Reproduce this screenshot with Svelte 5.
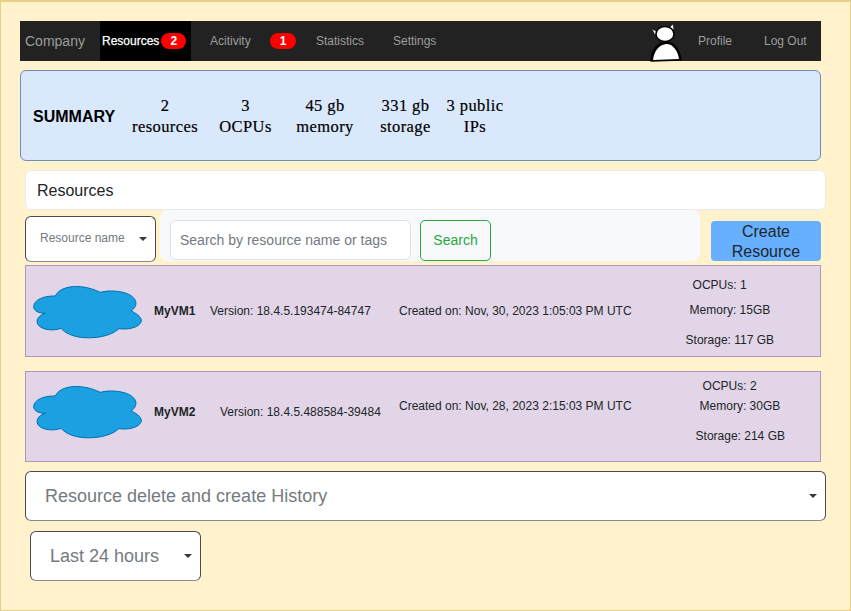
<script>
  const summary = [
    { top: '2', bottom: 'resources', width: 68, gap: 19 },
    { top: '3', bottom: 'OCPUs', width: 55, gap: 22 },
    { top: '45 gb', bottom: 'memory', width: 60, gap: 24 },
    { top: '331 gb', bottom: 'storage', width: 53, gap: 14 },
    { top: '3 public', bottom: 'IPs', width: 58, gap: 0 }
  ]
</script>

{#snippet cloud()}
  <svg class="cloud" viewBox="38 33 327 160" width="109" height="53.3" aria-hidden="true">
    <path d="M40 95C40 75 70 62 105 63C115 40 150 32 180 35C205 37 225 45 240 52C275 42 345 50 347 85C347 95 340 103 332 108C355 118 365 130 363 140C355 158 325 165 296 161C270 185 220 192 180 187C155 183 135 175 122 160C90 172 50 160 50 140C50 130 58 120 75 115C55 115 40 108 40 95Z" fill="#1ba1e2" stroke="#006eaf" stroke-width="3" />
  </svg>
{/snippet}

<div class="page">
  <nav class="nav">
    <span class="brand">Company</span>
    <span class="tab active">Resources<b class="badge">2</b></span>
    <span class="tab activity">Acitivity</span>
    <b class="badge second">1</b>
    <span class="tab stats">Statistics</span>
    <span class="tab settings">Settings</span>
    <svg class="avatar" viewBox="0 0 36 44" width="36" height="44" aria-hidden="true">
      <path d="M9 10L3 7L6 13ZM20 6L24 2L25 8Z" fill="#fff" stroke="#000" stroke-width="0.5" />
      <ellipse cx="16" cy="12" rx="9" ry="7.5" fill="#fff" stroke="#000" stroke-width="1.5" />
      <path d="M2 39C2 30 7 21 17 20C26 20 31 30 32 38Z" fill="#000" stroke="#000" stroke-width="1.5" stroke-linejoin="round" />
      <path d="M4 38C5 30 9 23 17 22C25 22 29 30 30 37Z" fill="#fff" />
    </svg>
    <span class="tab profile">Profile</span>
    <span class="tab logout">Log Out</span>
  </nav>

  <section class="summary">
    <strong>SUMMARY</strong>
    {#each summary as item}
      <div class="stat" style="width: {item.width}px; margin-right: {item.gap}px">
        <span>{item.top}</span>
        <span>{item.bottom}</span>
      </div>
    {/each}
  </section>

  <div class="title">Resources</div>

  <div class="toolbar">
    <div class="select name-select">Resource name<i class="caret"></i></div>
    <div class="search-panel">
      <div class="search-input">Search by resource name or tags</div>
      <div class="search-btn">Search</div>
    </div>
    <div class="create">Create Resource</div>
  </div>

  <div class="vm first">
    {@render cloud()}
    <b class="vm-name">MyVM1</b>
    <span class="version">Version: 18.4.5.193474-84747</span>
    <span class="created">Created on: Nov, 30, 2023 1:05:03 PM UTC</span>
    <div class="specs">
      <span class="ocpu">OCPUs: 1</span>
      <span class="memory">Memory: 15GB</span>
      <span class="storage">Storage: 117 GB</span>
    </div>
  </div>

  <div class="vm second-vm">
    {@render cloud()}
    <b class="vm-name">MyVM2</b>
    <span class="version">Version: 18.4.5.488584-39484</span>
    <span class="created">Created on: Nov, 28, 2023 2:15:03 PM UTC</span>
    <div class="specs">
      <span class="ocpu">OCPUs: 2</span>
      <span class="memory">Memory: 30GB</span>
      <span class="storage">Storage: 214 GB</span>
    </div>
  </div>

  <div class="select history">Resource delete and create History<i class="caret"></i></div>
  <div class="select range">Last 24 hours<i class="caret"></i></div>
</div>

<style>
  :global(body) {
    margin: 0;
  }

  .page {
    box-sizing: border-box;
    width: 851px;
    height: 611px;
    padding: 19px 24px 0 19px;
    overflow: hidden;
    background: #fff2cc;
    border: 1px solid #e8cf85;
    border-top-width: 2px;
    font-family: "Liberation Sans", Arial, sans-serif;
    color: #212529;
  }

  .nav {
    display: flex;
    align-items: center;
    width: 801px;
    height: 40px;
    padding-left: 5px;
    box-sizing: border-box;
    background: #222;
    color: #9d9d9d;
    font-size: 12px;
  }

  .brand {
    width: 75px;
    font-size: 14px;
    color: #9d9d9d;
  }

  .tab.active {
    display: flex;
    align-items: center;
    align-self: stretch;
    width: 89px;
    padding-left: 2px;
    background: #000;
    color: #fff;
    -webkit-text-stroke: 0.25px #fff;
  }

  .badge {
    display: inline-block;
    width: 25px;
    height: 16px;
    margin-left: 2px;
    border-radius: 8px;
    background: #f00;
    color: #fff;
    font-size: 12px;
    font-weight: 700;
    line-height: 16px;
    text-align: center;
    -webkit-text-stroke: 0;
  }

  .activity {
    width: 60px;
    margin-left: 19px;
  }

  .badge.second {
    margin: 0;
    width: 26px;
  }

  .stats {
    margin-left: 20px;
    width: 77px;
  }

  .settings {
    width: 44px;
  }

  .avatar {
    margin: 5px 0 0 212px;
    overflow: visible;
  }

  .profile {
    margin-left: 13px;
    width: 66px;
  }

  .summary {
    display: flex;
    align-items: center;
    box-sizing: border-box;
    width: 801px;
    height: 91px;
    margin-top: 9px;
    padding-left: 12px;
    background: #dae8fc;
    border: 1px solid #6c8ebf;
    border-radius: 6px;
    font-size: 16px;
  }

  .summary strong {
    width: 98px;
    margin-top: 2px;
    color: #000;
  }

  .stat {
    display: flex;
    flex-direction: column;
    align-items: center;
    font-family: "Liberation Serif", "Times New Roman", serif;
    font-size: 16.5px;
    letter-spacing: 0.4px;
    -webkit-text-stroke: 0.2px #000;
    line-height: 21px;
    white-space: nowrap;
    color: #000;
    margin-top: 1px;
  }

  .title {
    box-sizing: border-box;
    width: 801px;
    height: 40px;
    margin: 9px 0 0 5px;
    padding-left: 11px;
    background: #fff;
    border: 1px solid #e9ecef;
    border-radius: 6px;
    font-size: 16px;
    line-height: 40px;
  }

  .toolbar {
    display: flex;
    align-items: flex-start;
    height: 55px;
    margin-left: 5px;
  }

  .select {
    position: relative;
    box-sizing: border-box;
    background: #fff;
    border: 1px solid #4a4a4a;
    border-bottom-color: #8a8a8a;
    border-radius: 6px;
    color: #747a80;
  }

  .caret {
    position: absolute;
    top: 50%;
    right: 8px;
    margin-top: -2px;
    border: 4px solid transparent;
    border-top-color: #343a40;
    border-bottom-width: 0;
  }

  .name-select {
    width: 131px;
    height: 46px;
    margin-top: 6px;
    padding-left: 14px;
    font-size: 12px;
    line-height: 42px;
  }

  .search-panel {
    display: flex;
    align-items: flex-start;
    box-sizing: border-box;
    width: 540px;
    height: 51px;
    margin-left: 4px;
    padding: 10px 10px 0;
    background: #f8f9fa;
    border-radius: 8px;
  }

  .search-input {
    box-sizing: border-box;
    width: 241px;
    height: 40px;
    padding-left: 9px;
    background: #fff;
    border: 1px solid #dee2e6;
    border-radius: 6px;
    color: #747a80;
    font-size: 14px;
    line-height: 38px;
  }

  .search-btn {
    box-sizing: border-box;
    width: 71px;
    height: 41px;
    margin-left: 9px;
    border: 1px solid #28a745;
    border-radius: 5px;
    color: #28a745;
    font-size: 14px;
    line-height: 39px;
    text-align: center;
  }

  .create {
    box-sizing: border-box;
    width: 110px;
    height: 40px;
    margin: 11px 0 0 11px;
    padding-top: 1px;
    background: #66b0ff;
    border-radius: 4px;
    font-size: 16px;
    line-height: 20px;
    text-align: center;
  }

  .vm {
    display: flex;
    align-items: flex-start;
    box-sizing: border-box;
    width: 796px;
    margin-left: 5px;
    padding-left: 7px;
    background: #e1d5e7;
    border: 1px solid #b195bf;
    font-size: 12px;
    color: #212529;
  }

  .vm.first {
    height: 92px;
  }

  .vm.second-vm {
    height: 91px;
    margin-top: 14px;
  }

  .cloud {
    flex: none;
    margin-top: 20px;
  }

  .vm-name {
    flex: none;
    margin: 38px 0 0 12px;
    width: 56px;
  }

  .version {
    flex: none;
    margin-top: 38px;
    width: 189px;
    white-space: nowrap;
  }

  .created {
    flex: none;
    margin-top: 38px;
    white-space: nowrap;
  }

  .second-vm .cloud {
    margin-top: 14px;
  }

  .second-vm .vm-name {
    margin-top: 33px;
  }

  .second-vm .version {
    margin: 33px 0 0 10px;
    width: 179px;
  }

  .second-vm .created {
    margin-top: 27px;
  }

  .specs {
    position: relative;
    flex: 1;
    white-space: nowrap;
  }

  .specs span {
    position: absolute;
  }

  .first .ocpu { left: 61px; top: 12px; }
  .first .memory { left: 58px; top: 37px; }
  .first .storage { left: 54px; top: 67px; }
  .second-vm .ocpu { left: 71px; top: 7px; }
  .second-vm .memory { left: 68px; top: 27px; }
  .second-vm .storage { left: 64px; top: 57px; }

  .history {
    width: 801px;
    height: 50px;
    margin: 9px 0 0 5px;
    padding-left: 19px;
    font-size: 18px;
    line-height: 48px;
  }

  .range {
    width: 171px;
    height: 50px;
    margin: 10px 0 0 10px;
    padding-left: 19px;
    font-size: 18px;
    line-height: 48px;
  }
</style>
